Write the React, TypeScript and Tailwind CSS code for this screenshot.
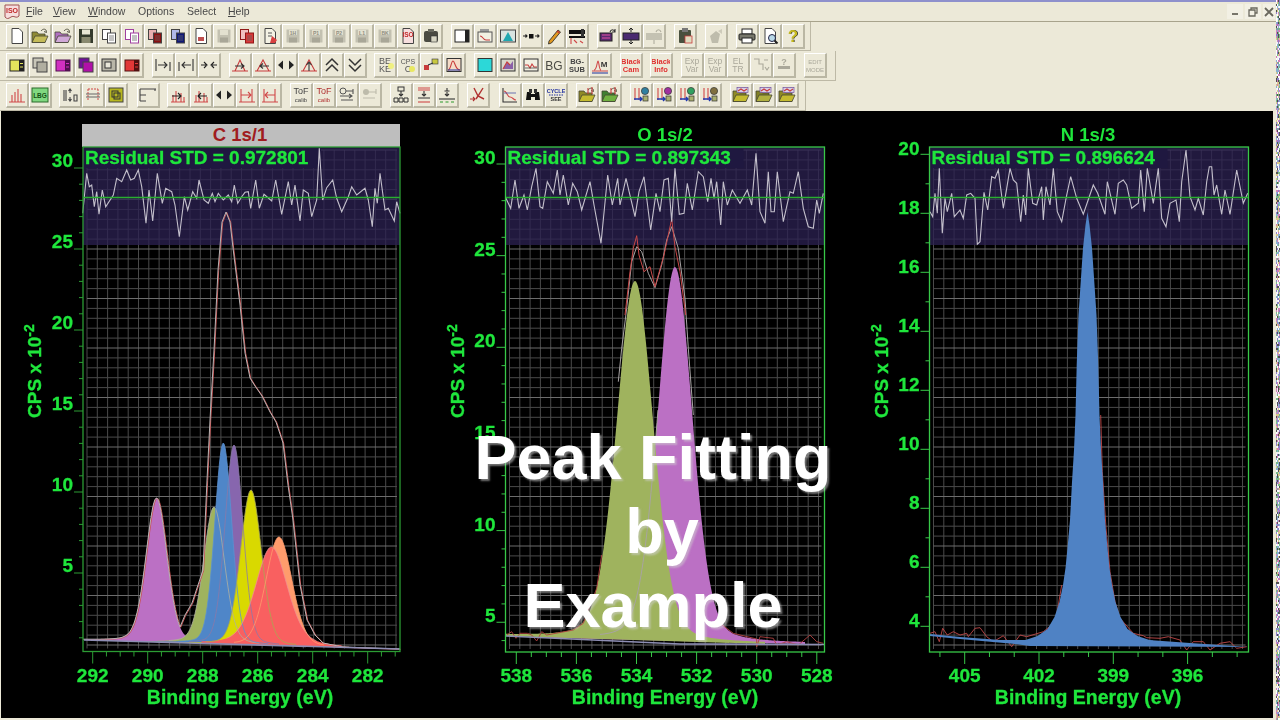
import type { ReactNode } from "react";

const GREEN = "#1fe63c";
const FONT = "Liberation Sans, Arial, sans-serif";

// ---------- toolbar glyphs ----------

function Label({ x, y, s, c, children, w = "bold" }: { x: number; y: number; s: number; c: string; children: ReactNode; w?: string }) {
  return (
    <text x={x} y={y} fontSize={s} fill={c} fontFamily={FONT} fontWeight={w} textAnchor="middle">
      {children}
    </text>
  );
}

const Page = ({ c = "#fff" }: { c?: string }) => <path d="M4 1.5h7l3.5 3.5v11.5H4z" fill={c} stroke="#444" />;

const Folder = ({ c = "#c4bb58", b = "#8f8a35" }: { c?: string; b?: string }) => (
  <>
    <path d="M1 15.5V5h5l1.5 2H14v8.5z" fill={b} stroke="#443" strokeWidth=".8" />
    <path d="M1 15.5l3-6.5h13l-3 6.5z" fill={c} stroke="#443" strokeWidth=".8" />
    <path d="M10 4c2-2.5 4-2 5-1M15 3l.5 2.5L13 4.5" fill="none" stroke="#554" />
  </>
);

const Floppy = ({ c = "#343a2c" }: { c?: string }) => (
  <>
    <rect x="2" y="2" width="14" height="14" fill={c} />
    <rect x="5" y="2.5" width="8" height="5" fill="#e8e6d4" />
    <rect x="4.5" y="10" width="9" height="6" fill="#8a8a70" />
  </>
);

const DimFloppy = ({ t = "" }: { t?: string }) => (
  <>
    <rect x="2.5" y="2.5" width="13" height="13" fill="#c3c1b1" />
    <rect x="5" y="3" width="8" height="5" fill="#e3e1d0" />
    <rect x="5" y="10.5" width="8" height="5" fill="#a9a798" />
    <Label x={9} y={8} s={5} c="#908e80">{t}</Label>
  </>
);

const TwoDocs = ({ a = "#fff", b = "#fff", e = "#444" }: { a?: string; b?: string; e?: string }) => (
  <>
    <rect x="2.5" y="2.5" width="8" height="10" fill={a} stroke={e} />
    <rect x="7.5" y="6" width="8" height="10" fill={b} stroke={e} />
    <path d="M9 9h5M9 11h5M9 13h5" stroke="#666" strokeWidth=".8" />
  </>
);

const Win = ({ c, s = "#222" }: { c: string; s?: string }) => (
  <>
    <rect x="2" y="4" width="14" height="11" fill={c} stroke={s} />
    <rect x="11" y="4" width="5" height="11" fill={s} />
    <path d="M12 7.5h3M12 11h3" stroke={c} />
  </>
);

const Stack = ({ a, b }: { a: string; b: string }) => (
  <>
    <rect x="2" y="2" width="10" height="10" fill={a} stroke="#444" />
    <rect x="6" y="6" width="10" height="10" fill={b} stroke="#444" />
  </>
);

const Lines = ({ d, c = "#333", w = 1.1 }: { d: string; c?: string; w?: number }) => <path d={d} fill="none" stroke={c} strokeWidth={w} />;

const Peak = ({ a = "#c83c3c" }: { a?: string }) => (
  <>
    <Lines d="M1 15h16M4 15L9 4l5 11" c={a} />
    <Lines d="M4 10h9M10 7.5l3 2.5-3 2.5" c="#333" />
  </>
);

const Hist = ({ d }: { d: string }) => (
  <>
    <Lines d="M2 16h14M4 16V9M7 16V5M12 16V7M15 16v-5" c="#d04848" />
    <Lines d={d} c="#222" />
  </>
);

const TwoText = ({ a, b, c = "#444", s = 8, s2, dim, w = "normal" }: { a: string; b: string; c?: string; s?: number; s2?: number; dim?: boolean; w?: string }) => (
  <>
    <Label x={9} y={8} s={s} c={dim ? "#aaa89a" : c} w={w}>{a}</Label>
    <Label x={9} y={16} s={s2 ?? s} c={dim ? "#aaa89a" : c} w={w}>{b}</Label>
  </>
);

const Arrows = () => <path d="M1 9l5-4.5v9zM17 9l-5-4.5v9z" fill="#222" />;

const LinkFolder = ({ c, b, d }: { c: string; b: string; d: string }) => (
  <>
    <Folder c={c} b={b} />
    <Lines d={d} c="#c83c3c" />
  </>
);

const FlowChart = ({ dot }: { dot: string }) => (
  <>
    <Lines d="M3 2v12M7 2v12" c="#d04848" />
    <Lines d="M2 13h8M8 11l2 2-2 2" c="#2038b0" w={1.4} />
    <circle cx="13" cy="5" r="3.6" fill={dot} stroke="#333" strokeWidth=".7" />
    <rect x="11" y="10" width="5" height="5" fill="#aab070" stroke="#333" strokeWidth=".7" />
  </>
);

const Binder = ({ c, b }: { c: string; b: string }) => (
  <>
    <Folder c={c} b={b} />
    <rect x="5" y="1.5" width="11" height="5" fill="#d8d0e8" stroke="#7050a0" strokeWidth=".7" />
    <Lines d="M6 5l3-2 3 2 3-2" c="#c83c3c" />
  </>
);

const ROW1: ReactNode[][] = [
  [
    <Page />,
    <Folder />,
    <Folder b="#b070c0" c="#d0a8d8" />,
    <Floppy />,
    <TwoDocs />,
    <TwoDocs e="#a040a0" />,
    <TwoDocs a="#e8b0b0" b="#8a1010" />,
    <TwoDocs a="#b0b8e8" b="#101878" />,
    <><Page /><rect x="6" y="10" width="6" height="4" fill="#c05050" /></>,
    <DimFloppy />,
    <TwoDocs a="#f0c0c0" b="#d83838" e="#901818" />,
    <><Page c="#f4f2e4" /><Lines d="M7 6h4M7 9h4" c="#555" /><path d="M11 9l5 4-2 3h-5z" fill="#d84040" /></>,
    <DimFloppy t="1H" />,
    <DimFloppy t="P1" />,
    <DimFloppy t="P2" />,
    <DimFloppy t="L1" />,
    <DimFloppy t="BK" />,
    <><Page c="#f6dede" /><Label x={9} y={10} s={6.5} c="#c02828">ISO</Label></>,
    <><rect x="2" y="4" width="14" height="11" rx="2" fill="#4a4a42" /><rect x="6" y="2" width="6" height="3" fill="#6a6a60" /><rect x="9" y="9" width="6" height="6" fill="#d8d6c4" stroke="#333" strokeWidth=".6" /></>,
  ],
  [
    <><rect x="2" y="3" width="14" height="12" fill="#fff" stroke="#222" /><rect x="12" y="3" width="4" height="12" fill="#222" /></>,
    <><rect x="4" y="2" width="9" height="3" fill="#999" /><rect x="2" y="5" width="14" height="10" fill="#f2f0e2" stroke="#555" /><Lines d="M4 9c3 0 3 4 6 4h4" c="#c83c3c" /></>,
    <><rect x="1.5" y="3" width="15" height="12" fill="#d8e4e0" stroke="#444" /><path d="M4 14l5-9 5 9z" fill="#20a8b0" /></>,
    <><rect x="7" y="7" width="4.5" height="4.5" fill="#111" /><Lines d="M1 9h4M3.5 7.5L5 9l-1.5 1.5M13 9h4M15.5 7.5L17 9l-1.5 1.5" c="#222" /></>,
    <><path d="M4 14l9-11 2.5 2-9 11-3 1z" fill="#e09820" stroke="#222" strokeWidth=".8" /><path d="M12 4l2.5 2" stroke="#c83030" strokeWidth="1.5" /></>,
    <><rect x="1" y="3" width="16" height="4" fill="#111" /><rect x="1" y="9" width="16" height="2" fill="#111" /><rect x="13" y="2" width="3" height="8" fill="#333" /><Lines d="M3 11v6M6 13l3 3M12 14l3 2" c="#d04848" /></>,
  ],
  [
    <><rect x="1" y="6" width="12" height="8" fill="#5a2a70" stroke="#222" /><path d="M3 8h8M3 11h8" stroke="#e050a0" /><Lines d="M11 5c1-3 4-3 5 0M16 2v3h-3" /></>,
    <><rect x="1" y="6" width="16" height="7" fill="#4a2a70" stroke="#222" /><path d="M9 1v4M7 3l2-2 2 2M9 13v4M7 15l2 2 2-2" stroke="#222" fill="none" /></>,
    <><rect x="1" y="6" width="16" height="7" fill="#c4c2b2" /><Lines d="M11 5c1-3 4-3 5 0M9 13v4" c="#b0ae9e" /></>,
  ],
  [<><rect x="3" y="3" width="12" height="13" rx="1" fill="#48503e" /><rect x="6" y="1" width="6" height="4" fill="#777" /><rect x="9" y="9" width="7" height="7" fill="#e0dcc0" stroke="#c83c3c" strokeWidth=".8" /></>],
  [<><path d="M3 9l6-5 4 3-2 9H5z" fill="#bebcac" /><path d="M11 4l4-2v5z" fill="#cecbbb" /></>],
  [
    <><rect x="4" y="2" width="10" height="5" fill="#fff" stroke="#222" /><rect x="1" y="7" width="16" height="6" rx="1" fill="#77776c" stroke="#222" /><rect x="4" y="11" width="10" height="5" fill="#fff" stroke="#222" /></>,
    <><Page /><circle cx="11" cy="11" r="3.5" fill="#b8d8e8" stroke="#224" /><Lines d="M13.5 13.5l3 3" c="#222" w={2} /></>,
    <><Label x={9.6} y={15} s={17} c="#222">?</Label><Label x={9} y={14.5} s={17} c="#c8bc20">?</Label></>,
  ],
];

const ROW2: ReactNode[][] = [
  [
    <Win c="#e4e45c" />,
    <Stack a="#c8c6b8" b="#b0aea0" />,
    <Win c="#d030c0" s="#501050" />,
    <Stack a="#701098" b="#b010a8" />,
    <><rect x="2" y="3" width="14" height="12" fill="#b8b6a8" stroke="#333" /><rect x="5" y="6" width="6" height="6" fill="#e8e6d8" stroke="#333" /></>,
    <Win c="#e03838" s="#501010" />,
  ],
  [
    <Lines d="M2 3v12M16 6v9M4 9h9M10 6l3 3-3 3" c="#333" />,
    <Lines d="M2 6v9M16 3v12M14 9H5M8 6L5 9l3 3" c="#333" />,
    <Lines d="M1 9h5M4 6l3 3-3 3M17 9h-5M14 6l-3 3 3 3" c="#222" />,
  ],
  [
    <Peak />,
    <><Lines d="M1 15h16M3 15L9 4l6 11" c="#c83c3c" /><Lines d="M15 10H6M9 7.5L6 10l3 2.5" c="#333" /></>,
    <Arrows />,
    <><Lines d="M1 15h16M3 15L9 4l6 11" c="#c83c3c" /><Lines d="M9 15V6M6.5 9L9 6l2.5 3" c="#333" /></>,
    <Lines d="M3 9l6-6 6 6M3 15l6-6 6 6" c="#333" w={1.5} />,
    <Lines d="M3 3l6 6 6-6M3 9l6 6 6-6" c="#333" w={1.5} />,
  ],
  [
    <><TwoText a="BE" b="KE" c="#555" s={9} /><circle cx="15" cy="10" r="3" fill="#f0f080" /></>,
    <><TwoText a="CPS" b="C" c="#555" s={7} s2={9} /><circle cx="13" cy="13" r="3" fill="#e8e860" /></>,
    <><rect x="2" y="9" width="5" height="5" fill="#c83c3c" /><rect x="10" y="3" width="6" height="5" fill="#c8c840" stroke="#334" strokeWidth=".6" /><Lines d="M6 9l5-2" c="#283040" /></>,
    <><rect x="2" y="2.5" width="14" height="13" fill="#f4dcc8" stroke="#333" /><Lines d="M3 14c3 0 3-9 5-9s2 9 7 9" c="#c83c3c" /><Lines d="M3 14h12" c="#3040a0" /></>,
  ],
  [
    <><rect x="2" y="2.5" width="14" height="13" fill="#2cd8d8" stroke="#333" /></>,
    <><rect x="2" y="3" width="14" height="12" fill="#d8d6ca" stroke="#333" /><path d="M4 13l4-7 3 3 3-4v8z" fill="#8a60a8" /><Lines d="M4 13l4-7 3 3" c="#c83c3c" /></>,
    <><rect x="2" y="3" width="14" height="12" fill="#f2f0e2" stroke="#333" /><Lines d="M3 9h3l2 3 2-4 2 3h3" c="#c83c3c" /><Lines d="M3 12h12" c="#333" w={0.7} /></>,
    <Label x={9} y={14} s={12} c="#4a4a44" w="normal">BG</Label>,
    <TwoText a="BG-" b="SUB" c="#444" s={7.5} w="bold" />,
    <><Lines d="M1 15h16M3 14c3 0 3-9 4-9s1 9 3 9" c="#d04848" /><Lines d="M1 17h16" c="#3040a0" /><Label x={13} y={11} s={8} c="#333">M</Label></>,
  ],
  [<TwoText a="Black" b="Cam" c="#e03030" s={7.5} w="bold" />],
  [<TwoText a="Black" b="Info" c="#e03030" s={7.5} w="bold" />],
  [
    <TwoText a="Exp" b="Var" dim s={8.5} />,
    <TwoText a="Exp" b="Var" dim s={8.5} />,
    <TwoText a="EL" b="TR" dim s={8.5} />,
    <Lines d="M2 3h5v5h4v6M12 4h4M13 11l2 3 2-3" c="#aaa89a" />,
    <><Label x={9} y={9} s={9} c="#aaa89a">?</Label><rect x="3" y="10" width="12" height="3" fill="#aaa89a" /></>,
  ],
  [<TwoText a="EDIT" b="MODE" dim s={6} />],
];

const ROW3: ReactNode[][] = [
  [
    <Lines d="M1 16h16M4 16V9M7 16V6M10 16V3M13 16V8" c="#d04848" />,
    <><rect x="1" y="2" width="16" height="14" fill="#80d880" stroke="#2a6a2a" /><Label x={9} y={12} s={6.5} c="#145014">LBG</Label></>,
  ],
  [
    <Lines d="M3 4v11M5 4v11M9 3v4M7.5 5L9 3l1.5 2M9 15v-4M7.5 13L9 15l1.5-2M13 9h3v6h-3z" c="#444" />,
    <><path d="M4 3h10M4 3v12M14 3v12" stroke="#d04848" strokeDasharray="2 1" fill="none" /><Lines d="M2 8h14M2 11h14" c="#666" /></>,
    <><rect x="2" y="2" width="14" height="14" fill="#b8b820" stroke="#444" /><rect x="5" y="5" width="6" height="6" fill="none" stroke="#333" /><rect x="7" y="7" width="6" height="6" fill="none" stroke="#333" /></>,
  ],
  [<Lines d="M1 3h16M1 15h6M1 3v12M7 9H1M16 3v2" c="#444" />],
  [
    <Hist d="M3 10h9M9 7l3 3-3 3" />,
    <Hist d="M15 10H6M9 7l-3 3 3 3" />,
    <Arrows />,
    <><Lines d="M3 3v13M14 3v13M1 16h16" c="#d04848" /><Lines d="M3 9h10M10 6l3 3-3 3" c="#d04848" /></>,
    <><Lines d="M3 3v13M14 3v13M1 16h16" c="#d04848" /><Lines d="M14 9H4M7 6L4 9l3 3" c="#d04848" /></>,
  ],
  [
    <TwoText a="ToF" b="calib" c="#444" s={9} s2={6} />,
    <TwoText a="ToF" b="calib" c="#b03030" s={9} s2={6} />,
    <><circle cx="5" cy="5" r="3" fill="none" stroke="#555" /><Lines d="M8 5h7M2 10h12M11 8l3 2-3 2M15 3v5M3 14h12" c="#555" /></>,
    <><circle cx="5" cy="6" r="3" fill="#bdbbab" /><Lines d="M8 6h7M2 12h12M15 3v5" c="#bdbbab" /></>,
  ],
  [
    <><rect x="6" y="1" width="6" height="4" fill="none" stroke="#333" /><Lines d="M9 5v5M7 8l2 2 2-2" /><path d="M2 12h4v4H2zM7 12h4v4H7zM12 12h4v4h-4z" fill="none" stroke="#333" /></>,
    <><Lines d="M3 2h12M3 4h12" c="#d04848" /><Lines d="M9 5v5M7 8l2 2 2-2M3 12h12" c="#333" /><Lines d="M3 16h12" c="#d04848" /></>,
    <><Lines d="M9 2v3M6.5 5h5M9 6v4M7 8l2 2 2-2" c="#333" /><Lines d="M1 13h16" c="#333" /><Lines d="M2 16h3M7.5 16h3M13 16h3" c="#2a9a2a" /></>,
  ],
  [<><Lines d="M14 2L9 10l-2 3M5 2l4 8 6 3" c="#b03030" w={1.4} /><Lines d="M1 13h5M4 11l2 2-2 2" c="#b03030" /></>],
  [
    <><Lines d="M2 2v14h14" c="#333" /><Lines d="M3 5c3 0 3 6 6 6s3 3 6 3" c="#d04848" /><Lines d="M3 7h12" c="#3040a0" w={.7} /></>,
    <><path d="M2 14l1-8h4v8zM11 14V6h4l1 8z" fill="#111" /><rect x="5" y="3" width="3" height="4" fill="#333" /><rect x="10" y="3" width="3" height="4" fill="#333" /><rect x="7" y="8" width="4" height="3" fill="#111" /></>,
    <><Label x={9} y={7} s={5.5} c="#2030a0">CYCLE</Label><path d="M2 9h14" stroke="#2030a0" strokeDasharray="1.5 1" /><Label x={9} y={15} s={5.5} c="#333">SEE</Label></>,
  ],
  [
    <LinkFolder c="#c4bb30" b="#8f8a25" d="M10 8V2M14 8V1" />,
    <LinkFolder c="#70b040" b="#3f8030" d="M10 8V2M14 8V1" />,
  ],
  [<FlowChart dot="#3080a0" />, <FlowChart dot="#a030a0" />, <FlowChart dot="#30a060" />, <FlowChart dot="#807040" />],
  [<Binder c="#c4bb30" b="#8f8a25" />, <Binder c="#b0b040" b="#808025" />, <Binder c="#c4bb30" b="#8f8a25" />],
];

const GAPS1 = ["", "ml-2", "ml-2", "ml-2", "ml-2", "ml-2"];
const GAPS2 = ["", "ml-2", "ml-2", "ml-[7px]", "ml-2", "ml-2", "ml-[7px]", "ml-2", "ml-2"];
const GAPS3 = ["", "ml-[7px]", "ml-[9px]", "ml-[7px]", "ml-2", "ml-2", "ml-2", "ml-[9px]", "ml-2", "ml-2", "ml-2"];

function Toolbar({ groups, gaps, className }: { groups: ReactNode[][]; gaps: string[]; className: string }) {
  return (
    <div className={"flex items-center pl-[6px] border-b border-r border-[#bdb9a6] " + className}>
      {groups.map((items, g) => (
        <div key={g} className={"flex " + gaps[g]}>
          {items.map((icon, i) => (
            <div
              key={i}
              className="w-[23px] h-[25px] flex items-center justify-center border-t border-l border-white border-b-2 border-r-2 border-b-[#bab7a4] border-r-[#bab7a4]"
            >
              <svg width="18" height="18" viewBox="0 0 18 18">
                {icon}
              </svg>
            </div>
          ))}
        </div>
      ))}
    </div>
  );
}

function MenuBar() {
  const item = "text-[10.5px] text-[#484848] font-['Liberation_Sans']";
  return (
    <div className="h-[20px] flex items-center border-b border-[#a8a38c] relative">
      <svg width="18" height="18" viewBox="0 0 18 18" className="ml-[3px]">
        <path d="M2 2h14v11c-3 3-5-1-8 1s-4 2-6 0z" fill="#f6dede" stroke="#a05050" />
        <Label x={9} y={10} s={7} c="#c02828">ISO</Label>
      </svg>
      <span className={item + " ml-[5px] w-[27px]"}><u>F</u>ile</span>
      <span className={item + " w-[35px]"}><u>V</u>iew</span>
      <span className={item + " w-[50px]"}><u>W</u>indow</span>
      <span className={item + " w-[49px]"}>Options</span>
      <span className={item + " w-[41px]"}>Select</span>
      <span className={item}><u>H</u>elp</span>
      <div className="ml-auto mr-px flex gap-[2px]">
        <div className="w-[16px] h-[15px] flex items-end justify-center pb-[4px] bg-[#f2f0e4]">
          <div className="w-[6px] h-[2px] bg-[#77756a]" />
        </div>
        <div className="w-[16px] h-[15px] flex items-center justify-center bg-[#f2f0e4]">
          <svg width="10" height="10" viewBox="0 0 10 10">
            <path d="M3 3V1h6v5H7M1 3h6v6H1z" fill="none" stroke="#6a685e" strokeWidth="1.3" />
          </svg>
        </div>
        <div className="w-[12px] h-[15px] flex items-center justify-center bg-[#f2f0e4]">
          <svg width="10" height="10" viewBox="0 0 10 10">
            <path d="M1 1l8 8M9 1L1 9" stroke="#6a685e" strokeWidth="1.8" />
          </svg>
        </div>
      </div>
    </div>
  );
}

// ---------- chart data (traced from the plot, coords are 3x crops) ----------

type Pt = [number, number];

const trace = (s: string, ox: number, oy: number): Pt[] =>
  s.trim().split(/\s+/).map((p) => {
    const [x, y] = p.split(",").map(Number);
    return [x / 3 + ox, y / 3 + oy] as Pt;
  });

const pts = (a: Pt[]) => a.map(([x, y]) => x.toFixed(1) + "," + y.toFixed(1)).join(" ");

const RES1 = trace(
  "248,295 260,175 268,215 275,210 283,275 290,230 297,298 307,225 317,275 340,240 350,190 365,200 380,165 392,195 403,190 415,165 425,215 438,325 447,225 458,318 472,175 487,265 497,220 515,230 525,270 538,365 553,245 563,285 578,230 590,250 597,195 612,255 625,265 637,235 645,260 655,235 670,255 685,240 695,260 703,210 713,265 725,245 735,232 745,230 752,280 767,195 778,280 792,238 815,258 827,195 845,298 865,200 875,270 885,210 900,318 910,225 925,235 935,305 950,255 958,100 968,255 980,218 998,195 1010,250 1025,290 1045,245 1055,215 1070,240 1095,220 1105,255 1117,335 1125,220 1132,265 1140,175 1155,285 1165,280 1183,318 1190,260 1200,295",
  0, 115,
);
const RES2 = trace(
  "197,248 212,280 225,195 237,280 252,240 262,285 275,215 288,160 300,275 308,280 322,200 340,235 352,165 360,240 370,180 385,270 398,205 412,230 425,285 450,200 462,270 483,385 503,180 517,270 533,190 540,270 558,190 585,305 597,230 612,185 632,345 648,235 660,290 672,195 685,190 695,320 705,160 718,298 732,295 742,205 757,285 775,170 790,185 803,260 813,190 822,250 830,200 842,330 850,200 862,270 877,225 900,265 922,225 935,270 948,115 960,290 975,325 985,170 993,290 1003,290 1012,170 1030,320 1050,230 1060,235 1075,170 1090,280 1105,335 1120,340 1130,255 1138,295 1150,235",
  440, 115,
);
const RES3 = trace(
  "210,290 218,305 225,235 232,295 238,160 247,355 255,250 262,290 275,235 283,305 300,285 310,310 320,240 332,235 345,250 352,388 360,380 372,232 383,285 395,185 405,190 415,165 430,280 440,220 450,160 460,195 470,205 482,320 490,240 497,300 505,160 518,265 530,270 545,215 550,315 558,215 570,270 580,160 592,290 605,320 620,240 632,185 650,250 670,298 700,210 713,235 735,298 742,200 765,298 775,205 790,195 800,210 815,280 835,265 842,165 853,290 862,160 880,265 895,160 905,310 918,335 930,265 948,255 958,320 965,200 978,105 990,245 1005,285 1015,250 1030,300 1040,200 1048,155 1055,155 1062,240 1070,210 1085,298 1095,225 1110,298 1130,165 1150,265 1163,235",
  860, 115,
);

type PeakDef = { c: number; top: number; s: number; fill: string; line: string; tail?: number };

function peakPts(p: PeakDef, base: (x: number) => number, from: number, to: number): Pt[] {
  const out: Pt[] = [];
  const h = base(p.c) - p.top;
  const t = p.tail ?? 0.15;
  for (let x = from; x <= to; x += 1) {
    const d = x - p.c;
    const g = Math.exp((-d * d) / (2 * p.s * p.s));
    const l = 1 / (1 + (d * d) / (1.4 * p.s * p.s));
    out.push([x, base(x) - h * ((1 - t) * g + t * l)]);
  }
  return out;
}

function PeakFill({ p, base, a, b }: { p: PeakDef; base: (x: number) => number; a: number; b: number }) {
  const top = peakPts(p, base, a, b);
  const poly = [...top, [b, base(b)] as Pt, [a, base(a)] as Pt];
  return <polygon points={pts(poly)} fill={p.fill} />;
}

const base1 = (x: number) => 640 + ((x - 83) / 317) * 9;
const C_PEAKS: PeakDef[] = [
  { c: 156.5, top: 498, s: 10.5, fill: "#bb70c4", line: "#bb70c4", tail: 0.2 },
  { c: 214, top: 507, s: 10.5, fill: "#9fb35e", line: "#b0b0a0", tail: 0.2 },
  { c: 234, top: 445, s: 9, fill: "#8766ae", line: "#8a78a8" },
  { c: 223.3, top: 443, s: 8.5, fill: "#4f86c8", line: "#5a90d0" },
  { c: 251, top: 490, s: 10.5, fill: "#d9d900", line: "#a8a850" },
  { c: 279, top: 537, s: 13, fill: "#ff9c6c", line: "#ff9c6c" },
  { c: 271.5, top: 547, s: 16, fill: "#f96060", line: "#f09090", tail: 0.3 },
];
const C_FIT: Pt[] = [
  ...peakPts(C_PEAKS[0], base1, 83, 180),
  [185, 615], [192, 603], [203, 570], [207, 480], [210, 420], [214, 350], [218, 270], [222, 222], [226, 212], [230, 222], [233, 248], [240, 305], [245, 353], [250, 378], [255, 386], [262, 396], [270, 412], [276, 422], [283, 443], [288, 485], [293, 520], [300, 585], [307, 620], [315, 635], [323, 643], [343, 647], [400, 649],
];

const base2 = (x: number) => (x < 680 ? 636 + ((x - 505) / 175) * 8 : 644);
const O_PEAKS: PeakDef[] = [
  { c: 675, top: 267, s: 17.5, fill: "#bb70c4", line: "#bb70c4", tail: 0.22 },
  { c: 635, top: 281, s: 18.5, fill: "#9fb35e", line: "#9fb35e", tail: 0.22 },
];
const O_FIT = trace("535,800 545,700 560,580 575,440 590,395 605,410 625,475 645,518 665,450 680,375 695,335 715,400 735,550 745,700 760,900", 440, 115);
const O_RED = trace(
  "555,600 570,470 580,400 590,362 597,420 612,470 630,455 645,515 672,420 695,312 705,395 720,470 737,600",
  440, 115,
);
const O_NOISE_L = trace("200,660 215,650 228,670 240,655 262,655 275,660 290,678 305,650 320,660 400,645 430,625 470,520 485,420", 440, 415);
const O_NOISE_R = trace("840,625 880,655 950,672 950,695 960,665 1000,670 1010,690 1040,680 1075,690 1110,660 1130,680 1150,685", 440, 415);

const N_WIDTHS: Pt[] = [
  [0, 212], [2, 225], [4.5, 248], [7, 285], [9, 315], [10.8, 365], [12, 415], [13.5, 450], [15.5, 482], [17.5, 520], [20, 548], [22, 568], [24.5, 585], [28, 602], [33, 617], [40, 629], [50, 636], [62, 640],
];
const N_FILL: Pt[] = [
  [930, 634], [960, 637], [1000, 640],
  ...N_WIDTHS.slice().reverse().map(([w, y]) => [1087.5 - w, y] as Pt),
  ...N_WIDTHS.slice(1).map(([w, y]) => [1087.5 + w, y] as Pt),
  [1190, 643], [1248, 647], [1030, 646], [1015, 644], [960, 639], [930, 636],
];
const N_NOISE_L = trace("210,655 225,650 238,680 248,640 262,660 280,650 300,660 320,655 325,665 345,640 360,638 380,665 400,680 430,662 455,695 480,660 500,665 550,650 575,630 590,600 605,510", 860, 415);
const N_NOISE_R = trace("722,0 727,170 738,340 750,470 765,560 780,610 820,655 850,662 860,668 900,670 925,665 960,675 980,705 1000,680 1030,680 1050,705 1080,685 1110,680 1130,700 1160,695", 860, 415);

// ---------- chart panel ----------

type Tick = { at: number; label?: string };

type PanelProps = {
  x0: number;
  left: number;
  right: number;
  bottom: number;
  title: string;
  active?: boolean;
  residual: string;
  res: Pt[];
  yTicks: Tick[];
  xTicks: Tick[];
  centre: number;
  frame: string;
  yLabelX: number;
  labelDy: number;
  children: ReactNode;
};

function Panel({ x0, left, right, bottom, title, active, residual, res, yTicks, xTicks, centre, frame, yLabelX, labelDy, children }: PanelProps) {
  const cols: number[] = [];
  for (let x = left + 4; x < right - 2; x += 10.3) cols.push(x);
  const rows: number[] = [];
  for (let y = 150; y < bottom - 2; y += 9.9) rows.push(y);
  const heavy = { stroke: GREEN, strokeWidth: 0.3 };
  return (
    <svg width="424" height="607" viewBox={`${x0} 111 424 607`} className="block shrink-0" fontFamily={FONT} fontWeight="bold">
      {active && <rect x={left - 1} y={124} width={right - left + 1} height={23} fill="#bebebe" />}
      <text x={centre} y={141} fontSize={18.5} textAnchor="middle" fill={active ? "#a01c20" : GREEN}>
        {title}
      </text>

      {cols.map((x) => (
        <line key={x} x1={x} x2={x} y1={150} y2={bottom - 3} stroke="#4a4a4a" />
      ))}
      {rows.map((y, i) => (
        <line key={y} x1={left + 4} x2={right - 3} y1={y} y2={y} stroke={i % 5 === 0 ? "#6c6c6c" : "#4a4a4a"} />
      ))}
      <rect x={left} y={147} width={right - left} height={98} fill="#2b2152" fillOpacity=".76" />
      <rect x={left + 2} y={149} width={236} height={19} fill="#1f1840" />

      {children}

      <polyline points={pts(res)} fill="none" stroke="#c4c0cc" strokeWidth="1.1" />
      <line x1={left} x2={right} y1={197.5} y2={197.5} stroke="#2aae30" strokeWidth="1.5" />
      <text x={left + 2} y={164} fontSize={19} fill={GREEN} {...heavy}>
        {residual}
      </text>

      <rect x={left} y={147} width={right - left} height={bottom - 147} fill="none" stroke={frame} strokeWidth="1.3" />

      {yTicks.map((t) => (
        <g key={t.at}>
          <line x1={left - (t.label ? 9 : 4)} x2={left} y1={t.at} y2={t.at} stroke={frame} />
          {t.label && (
            <text x={left - 10} y={t.at + labelDy} fontSize={19} fill={GREEN} textAnchor="end" {...heavy}>
              {t.label}
            </text>
          )}
        </g>
      ))}
      {xTicks.map((t) => (
        <g key={t.at}>
          <line x1={t.at} x2={t.at} y1={bottom} y2={bottom + (t.label ? 12 : 5)} stroke={frame} />
          {t.label && (
            <text x={t.at} y={682} fontSize={19} fill={GREEN} textAnchor="middle" {...heavy}>
              {t.label}
            </text>
          )}
        </g>
      ))}
      <text x={centre} y={704} fontSize={19.5} fill={GREEN} textAnchor="middle" {...heavy}>
        Binding Energy (eV)
      </text>
      <text transform={`rotate(-90 ${yLabelX} 418)`} x={yLabelX} y={418} fontSize={19} fill={GREEN} {...heavy}>
        CPS x 10
        <tspan dy={-7} fontSize={14}>-2</tspan>
      </text>
    </svg>
  );
}

function ticks(start: number, step: number, sub: number, labels: string[], extraBefore = 0): Tick[] {
  const out: Tick[] = [];
  for (let i = -extraBefore; i < labels.length * sub + sub; i++) {
    const lab = i >= 0 && i % sub === 0 ? labels[i / sub] : undefined;
    out.push({ at: start + (step / sub) * i, label: lab });
  }
  return out;
}

const Y1 = ticks(168, 81, 5, ["30", "25", "20", "15", "10", "5"]).filter((t) => t.at < 650);
const X1 = ticks(92.7, 55, 4, ["292", "290", "288", "286", "284", "282"]).filter((t) => t.at < 398);
const Y2 = ticks(164, 91.65, 5, ["30", "25", "20", "15", "10", "5"]).filter((t) => t.at < 650);
const X2 = ticks(516.3, 60.1, 4, ["538", "536", "534", "532", "530", "528"]).filter((t) => t.at < 822);
const Y3 = ticks(154.3, 59, 2, ["20", "18", "16", "14", "12", "10", "8", "6", "4"]).filter((t) => t.at < 650);
const X3 = ticks(964.7, 74.3, 3, ["405", "402", "399", "396"], 1).filter((t) => t.at > 931 && t.at < 1246);

const hash = (n: number) => {
  const v = Math.sin(n * 12.9898) * 43758.5453;
  return v - Math.floor(v);
};
const NOISE_COLORS = ["#d080b8", "#78b888", "#8f80c8", "#f0f0f0", "#505050", "#d8c888", "#88b0d0", "#ffffff"];

function NoiseStrip() {
  const cells = [];
  for (let y = 0; y < 360; y++) {
    for (let x = 0; x < 4; x++) {
      cells.push(
        <rect key={y * 4 + x} x={x} y={y * 2} width="1" height="2" fill={NOISE_COLORS[Math.floor(hash(y * 4 + x + 1) * NOISE_COLORS.length)]} />,
      );
    }
  }
  return (
    <svg width="4" height="720" className="block shrink-0">
      {cells}
    </svg>
  );
}

export default function App() {
  return (
    <div className="flex w-[1280px] h-[720px] overflow-hidden bg-[#ece9d8]">
      <div className="w-[1276px] flex flex-col">
        <div className="h-[2px] bg-[#8e90cc]" />
        <div className="blur-[0.5px]">
          <MenuBar />
          <Toolbar groups={ROW1} gaps={GAPS1} className="h-[29px] w-[811px]" />
          <Toolbar groups={ROW2} gaps={GAPS2} className="h-[30px] w-[836px]" />
          <Toolbar groups={ROW3} gaps={GAPS3} className="h-[30px] w-[806px]" />
        </div>

        <div className="relative flex h-[607px] ml-px mr-[3px] bg-black overflow-hidden">
          <div className="flex blur-[0.4px]">
            <Panel
              x0={1} left={83} right={400} bottom={651.5} title="C 1s/1" active centre={240} frame="#2c9c34"
              residual="Residual STD = 0.972801" res={RES1} yTicks={Y1} xTicks={X1} yLabelX={41} labelDy={-1}
            >
              {C_PEAKS.map((p) => (
                <PeakFill key={p.c} p={p} base={base1} a={Math.max(84, p.c - 70)} b={p.c + 70} />
              ))}
              {C_PEAKS.slice(1).map((p) => (
                <polyline key={p.c} points={pts(peakPts(p, base1, p.c - 45, p.c + 45))} fill="none" stroke={p.line} strokeWidth=".8" />
              ))}
              <polyline points={pts(C_FIT)} fill="none" stroke="#c85050" strokeWidth="1" transform="translate(.7 .3)" />
              <polyline points={pts(C_FIT)} fill="none" stroke="#b8b4b4" strokeWidth="1" />
              <line x1={84} x2={400} y1={640} y2={649} stroke="#8e8eb4" strokeWidth="1.6" />
            </Panel>

            <Panel
              x0={425} left={505.5} right={824.5} bottom={652} title="O 1s/2" centre={665} frame="#38c848"
              residual="Residual STD = 0.897343" res={RES2} yTicks={Y2} xTicks={X2} yLabelX={464} labelDy={0}
            >
              {O_PEAKS.map((p) => (
                <PeakFill key={p.c} p={p} base={base2} a={p.c - 130} b={Math.min(823, p.c + 130)} />
              ))}
              <polyline points={pts(peakPts(O_PEAKS[0], base2, 600, 658))} fill="none" stroke="#a8a4a0" strokeWidth="1" />
              <polyline points={pts(O_FIT)} fill="none" stroke="#a8a4a4" strokeWidth="1" />
              <polyline points={pts(O_RED)} fill="none" stroke="#c84848" strokeWidth="1" />
              <polyline points={pts(O_NOISE_L)} fill="none" stroke="#b04040" strokeWidth=".9" />
              <polyline points={pts(O_NOISE_R)} fill="none" stroke="#b04040" strokeWidth=".9" />
              <polyline points="506,636 680,644 824,644.5" fill="none" stroke="#8e8eb4" strokeWidth="1.6" />
            </Panel>

            <Panel
              x0={849} left={929.5} right={1248.5} bottom={652} title="N 1s/3" centre={1088} frame="#38c848"
              residual="Residual STD = 0.896624" res={RES3} yTicks={Y3} xTicks={X3} yLabelX={888} labelDy={1}
            >
              <polyline points={pts(N_NOISE_L)} fill="none" stroke="#c04848" strokeWidth=".9" />
              <polyline points={pts(N_NOISE_R)} fill="none" stroke="#c04848" strokeWidth=".9" />
              <polygon points={pts(N_FILL)} fill="#4f82c4" />
            </Panel>
          </div>

          <div className="absolute left-[452px] top-[309px] w-[400px] flex flex-col items-center text-[63px] leading-[74px] font-bold text-white font-['Liberation_Sans'] blur-[0.5px] [text-shadow:2px_2px_2px_rgba(210,210,210,0.55)]">
            <span>Peak Fitting</span>
            <span className="pl-[18px]">by</span>
            <span>Example</span>
          </div>
        </div>
      </div>
      <NoiseStrip />
    </div>
  );
}
